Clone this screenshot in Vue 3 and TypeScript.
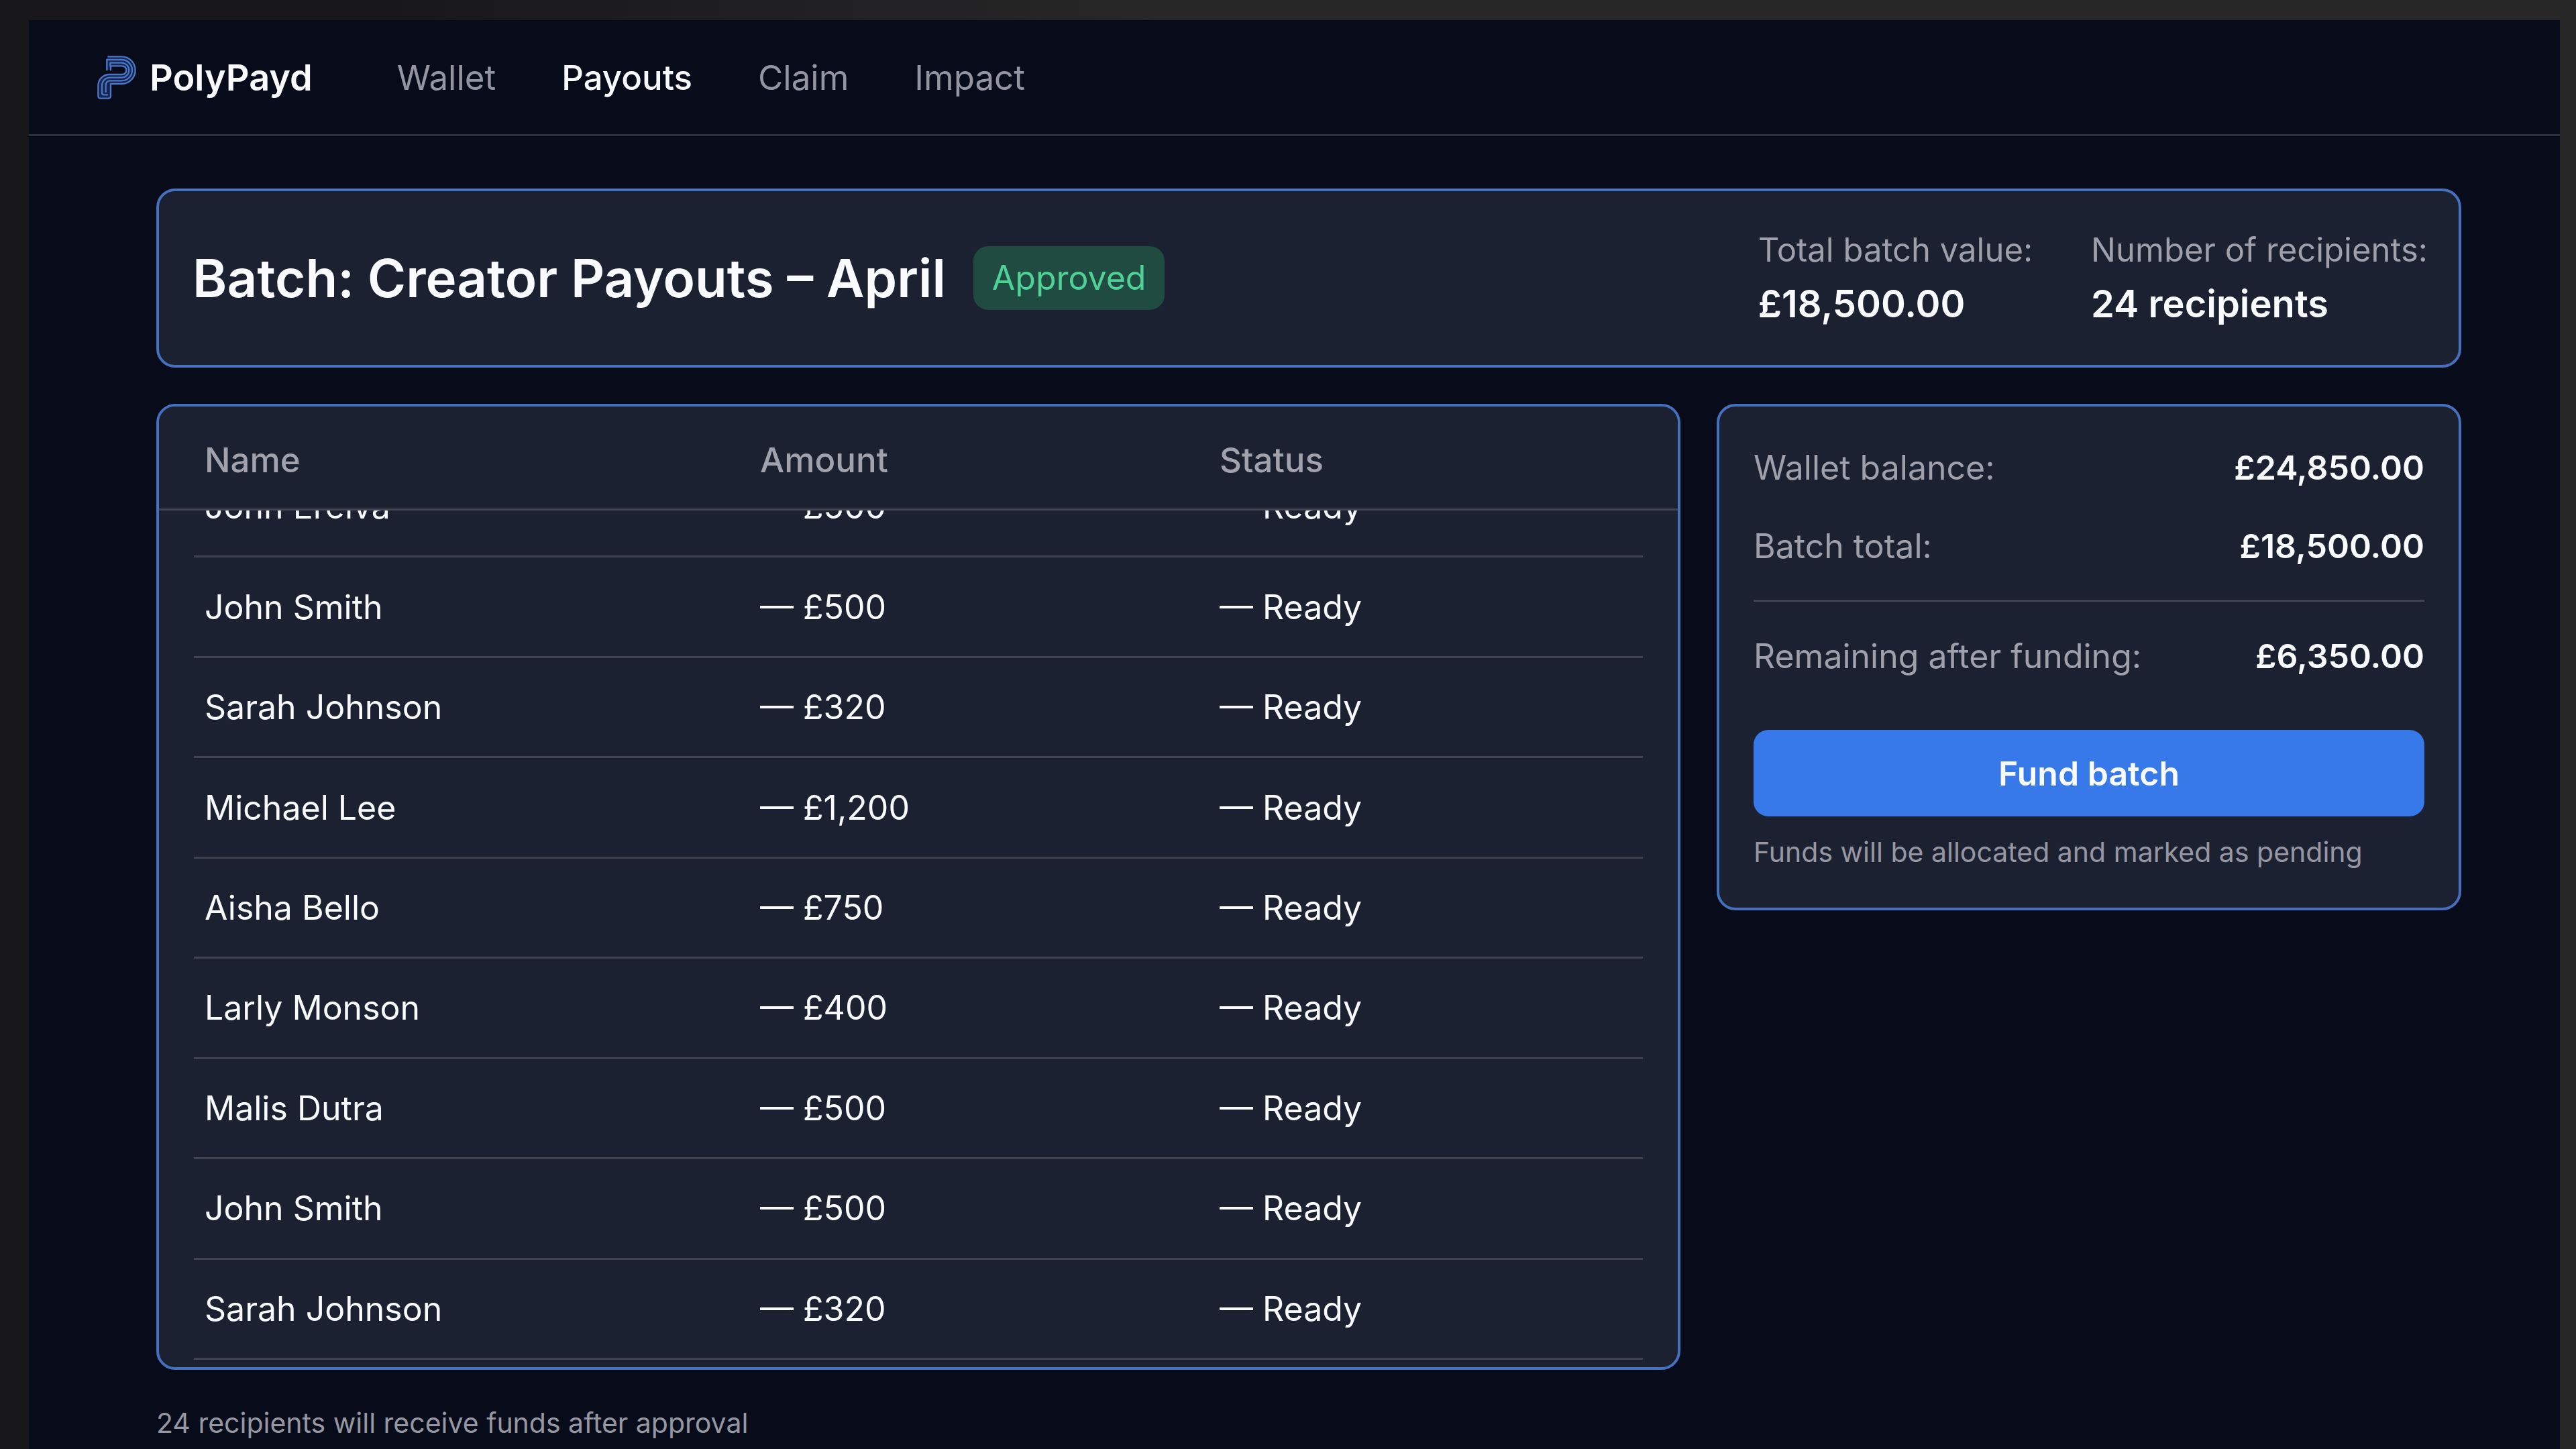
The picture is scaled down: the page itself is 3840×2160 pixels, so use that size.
<script setup lang="ts">
import { onMounted, ref } from 'vue'

interface NavItem {
  label: string
  active?: boolean
}

interface Payout {
  name: string
  amount: string
  status: string
}

const nav: NavItem[] = [
  { label: 'Wallet' },
  { label: 'Payouts', active: true },
  { label: 'Claim' },
  { label: 'Impact' },
]

const payouts: Payout[] = [
  { name: 'John Ereiva', amount: '£500', status: 'Ready' },
  { name: 'John Smith', amount: '£500', status: 'Ready' },
  { name: 'Sarah Johnson', amount: '£320', status: 'Ready' },
  { name: 'Michael Lee', amount: '£1,200', status: 'Ready' },
  { name: 'Aisha Bello', amount: '£750', status: 'Ready' },
  { name: 'Larly Monson', amount: '£400', status: 'Ready' },
  { name: 'Malis Dutra', amount: '£500', status: 'Ready' },
  { name: 'John Smith', amount: '£500', status: 'Ready' },
  { name: 'Sarah Johnson', amount: '£320', status: 'Ready' },
]

const scroller = ref<HTMLElement | null>(null)

onMounted(() => {
  if (scroller.value) scroller.value.scrollTop = scroller.value.scrollHeight
})
</script>

<template>
  <div class="page">
    <div class="frame">
      <header class="topbar">
        <a class="brand" href="#">
          <svg class="logo" viewBox="70 63 180 201" aria-hidden="true">
            <path
              class="logo-base"
              d="M113 130V80L122 70H182A61 61 0 0 1 182 192H133V246Q133 257 122 257H88Q77 257 77 246V200A50 50 0 0 1 127 150H184A19 19 0 0 0 184 112H133V130Z"
            />
            <path
              class="logo-line"
              d="M122 70H182A61 61 0 0 1 182 192H133V246Q133 257 122 257H88Q77 257 77 246V200A50 50 0 0 1 127 150H184A19 19 0 0 0 184 112H133V130"
            />
            <path class="logo-line" d="M116 130V84H182A47 47 0 0 1 182 178H130A19 19 0 0 0 111 197V228" />
            <path class="logo-line" d="M131 112V98H182A33 33 0 0 1 182 164H129A35 35 0 0 0 94 199V232Q94 241 103 241H118" />
          </svg>
          <span>PolyPayd</span>
        </a>
        <nav class="nav" aria-label="Main">
          <a
            v-for="item in nav"
            :key="item.label"
            href="#"
            :class="{ active: item.active }"
            :aria-current="item.active ? 'page' : undefined"
          >{{ item.label }}</a>
        </nav>
      </header>

      <main class="content">
        <section class="card summary">
          <h1>Batch: Creator Payouts – April</h1>
          <span class="badge">Approved</span>
          <dl class="stats">
            <div>
              <dt>Total batch value:</dt>
              <dd>£18,500.00</dd>
            </div>
            <div>
              <dt>Number of recipients:</dt>
              <dd>24 recipients</dd>
            </div>
          </dl>
        </section>

        <div class="columns">
          <section class="card list">
            <div ref="scroller" class="scroller">
              <table>
                <thead>
                  <tr>
                    <th scope="col">Name</th>
                    <th scope="col">Amount</th>
                    <th scope="col">Status</th>
                  </tr>
                </thead>
                <tbody>
                  <tr v-for="(p, i) in payouts" :key="i">
                    <td>{{ p.name }}</td>
                    <td>— {{ p.amount }}</td>
                    <td>— {{ p.status }}</td>
                  </tr>
                </tbody>
              </table>
            </div>
          </section>

          <aside class="card funding">
            <dl>
              <div class="line">
                <dt>Wallet balance:</dt>
                <dd>£24,850.00</dd>
              </div>
              <div class="line">
                <dt>Batch total:</dt>
                <dd>£18,500.00</dd>
              </div>
              <div class="line remaining">
                <dt>Remaining after funding:</dt>
                <dd>£6,350.00</dd>
              </div>
            </dl>
            <button type="button">Fund batch</button>
            <p class="hint">Funds will be allocated and marked as pending</p>
          </aside>
        </div>

        <p class="footnote">24 recipients will receive funds after approval</p>
      </main>
    </div>
  </div>
</template>

<style>
body {
  background: #18181b;
}
</style>

<style scoped>
.page {
  display: flex;
  box-sizing: border-box;
  min-height: 100vh;
  padding: 30px 24px 0 43px;
  background: linear-gradient(to right, #18181b 15%, #272728 45%);
  color: #fafbfe;
  font-family: Inter, "Liberation Sans", sans-serif;
  font-size: 50px;
}

.frame {
  flex: 1;
  min-width: 0;
  background: #080c1a;
}

h1,
p,
dl,
dd {
  margin: 0;
}

a {
  color: inherit;
  text-decoration: none;
}

.topbar {
  display: flex;
  align-items: center;
  gap: 126px;
  box-sizing: border-box;
  height: 173px;
  padding-left: 101px;
  border-bottom: 3px solid #2c303b;
}

.brand {
  display: flex;
  align-items: center;
  gap: 19px;
  font-size: 54px;
  font-weight: 600;
}

.logo {
  width: 60px;
  height: 67px;
}

.logo-base {
  fill: #152550;
}

.logo-line {
  fill: none;
  stroke: #4b76c4;
  stroke-width: 7;
  stroke-linecap: round;
  stroke-linejoin: round;
}

.nav {
  display: flex;
  gap: 98px;
  color: #9495a1;
  font-size: 51px;
}

.nav .active {
  color: #fafbfe;
  font-weight: 500;
}

.content {
  display: flex;
  flex-direction: column;
  gap: 54px;
  padding: 78px 147px 14px 190px;
}

.card {
  box-sizing: border-box;
  border: 4px solid #4470bd;
  border-radius: 28px;
  background: #1c2132;
}

.summary {
  display: flex;
  align-items: center;
  gap: 41px;
  min-height: 267px;
  padding: 0 46px 0 50px;
}

h1 {
  font-size: 78px;
  font-weight: 600;
  white-space: nowrap;
}

.badge {
  padding: 14px 28px;
  border-radius: 22px;
  background: #204b40;
  color: #4fd298;
  line-height: 67px;
}

.stats {
  display: flex;
  gap: 87px;
  margin-left: auto;
  padding-bottom: 4px;
  line-height: 80px;
  white-space: nowrap;
}

.stats dt {
  color: #9fa0ab;
  font-size: 49px;
}

.stats dd {
  font-size: 56px;
  font-weight: 600;
}

.columns {
  display: grid;
  grid-template-columns: 2272fr 1110fr;
  align-items: start;
  gap: 54px;
}

.list {
  overflow: hidden;
}

.scroller {
  max-height: 1432px;
  overflow-y: auto;
  scrollbar-width: none;
}

table,
thead {
  display: block;
}

thead {
  position: sticky;
  top: 0;
  border-bottom: 3px solid #434652;
  background: #1c2132;
}

tr {
  display: grid;
  grid-template-columns: 828fr 685fr 615fr;
}

thead tr {
  padding: 7px 68px 0;
}

th {
  padding: 0;
  color: #a1a2ad;
  font-size: 51px;
  font-weight: 500;
  line-height: 145px;
  text-align: left;
}

tbody {
  display: grid;
  grid-auto-rows: 1fr;
  height: 1345px;
  margin: 0 52px;
  padding-bottom: 11px;
}

tbody tr {
  align-items: center;
  padding: 0 16px;
  border-bottom: 3px solid #414450;
}

td {
  padding: 0;
}

.funding {
  padding: 61px 51px 58px;
}

.line {
  display: flex;
  justify-content: space-between;
  margin-bottom: 57px;
  line-height: 60px;
}

.line dt {
  color: #9fa0ab;
}

.line dd {
  font-weight: 600;
}

.remaining {
  margin: -7px 0 80px;
  padding-top: 51px;
  border-top: 3px solid #414450;
}

button {
  width: 100%;
  height: 129px;
  border: 0;
  border-radius: 22px;
  background: #3779e9;
  color: #fafbfe;
  font: 600 50px Inter, "Liberation Sans", sans-serif;
}

.hint,
.footnote {
  color: #9697a2;
  font-size: 41px;
  line-height: 50px;
}

.hint {
  margin-top: 28px;
}
</style>
